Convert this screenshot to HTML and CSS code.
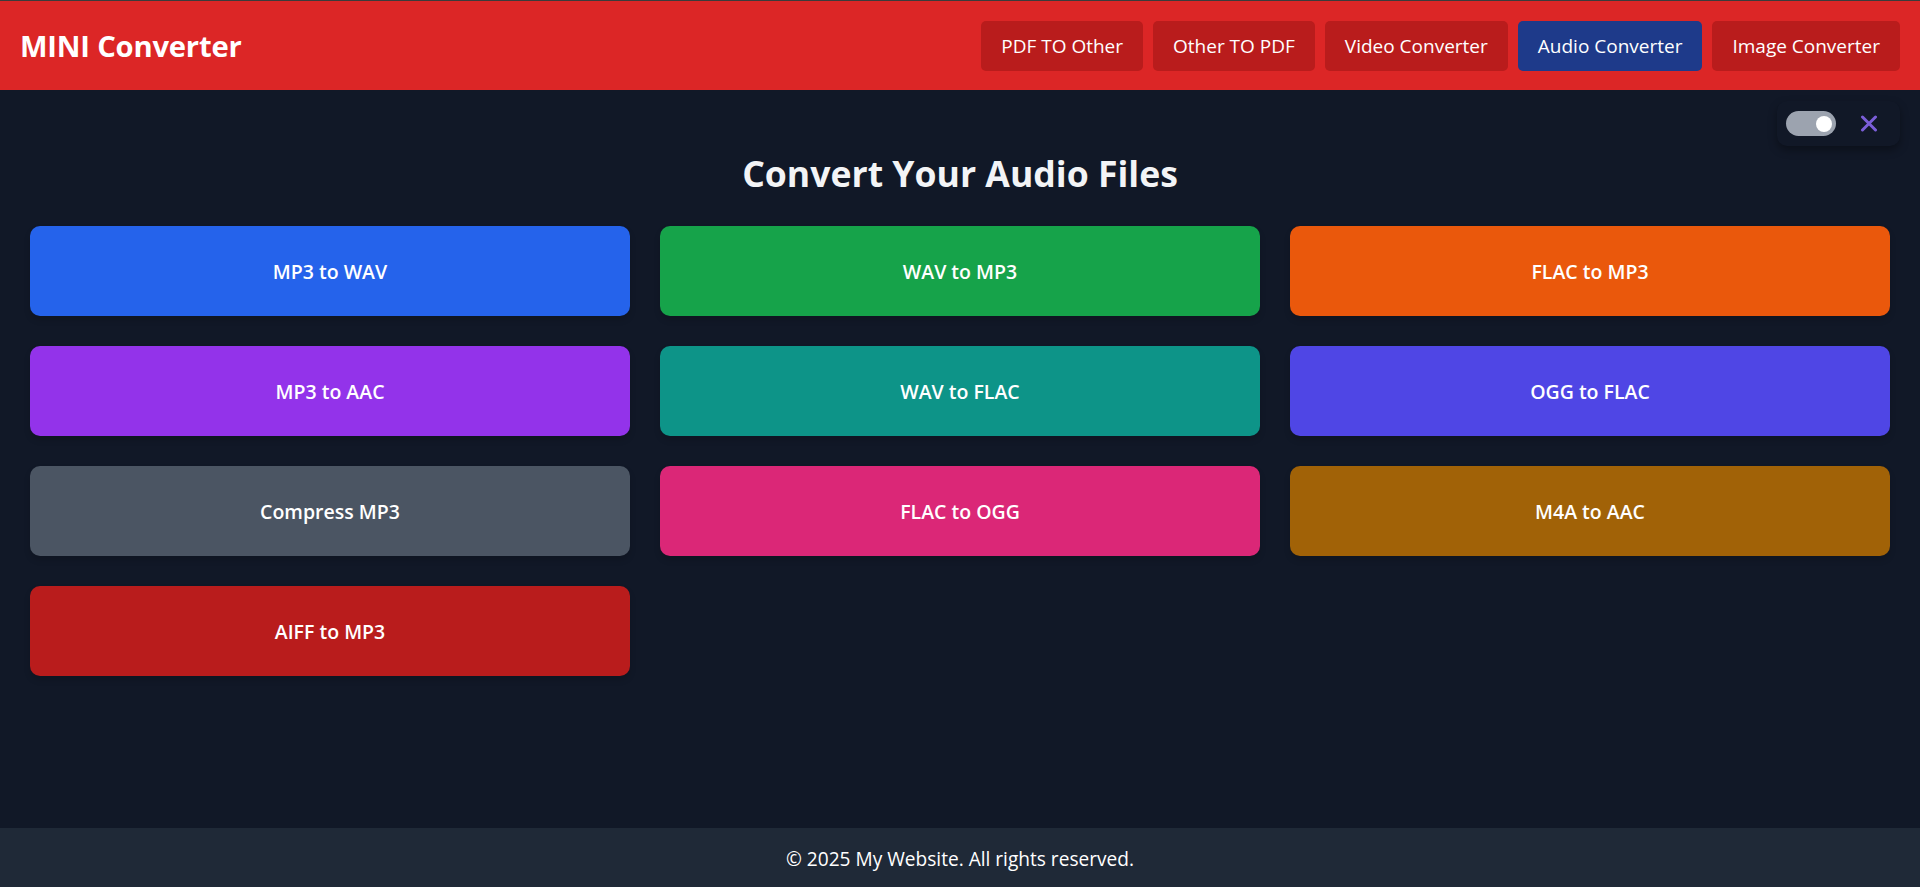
FILE: index.html
```html
<!DOCTYPE html>
<html lang="en">
<head>
<meta charset="utf-8">
<title>MINI Converter</title>
<link rel="stylesheet" href="styles.css">
</head>
<body>
<div class="page">
  <header class="header">
    <div class="logo">MINI Converter</div>
    <nav class="nav">
      <a class="nav-btn" href="#">PDF TO Other</a>
      <a class="nav-btn" href="#">Other TO PDF</a>
      <a class="nav-btn" href="#">Video Converter</a>
      <a class="nav-btn active" href="#">Audio Converter</a>
      <a class="nav-btn" href="#">Image Converter</a>
    </nav>
  </header>
  <main class="main">
    <div class="controls">
      <span class="toggle"><span class="knob"></span></span>
      <span class="close">
        <svg width="18" height="17" viewBox="0 0 18 17"><path d="M2.5 2 L15.5 15 M15.5 2 L2.5 15" stroke="#7b5ed8" stroke-width="3" stroke-linecap="round"/></svg>
      </span>
    </div>
    <h1 class="title">Convert Your Audio Files</h1>
    <div class="grid">
      <a class="tool c-blue" href="#">MP3 to WAV</a>
      <a class="tool c-green" href="#">WAV to MP3</a>
      <a class="tool c-orange" href="#">FLAC to MP3</a>
      <a class="tool c-purple" href="#">MP3 to AAC</a>
      <a class="tool c-teal" href="#">WAV to FLAC</a>
      <a class="tool c-indigo" href="#">OGG to FLAC</a>
      <a class="tool c-gray" href="#">Compress MP3</a>
      <a class="tool c-pink" href="#">FLAC to OGG</a>
      <a class="tool c-yellow" href="#">M4A to AAC</a>
      <a class="tool c-red" href="#">AIFF to MP3</a>
    </div>
  </main>
  <footer class="footer">© 2025 My Website. All rights reserved.</footer>
</div>
</body>
</html>
```
FILE: styles.css
```css
* { box-sizing: border-box; }
html, body { margin: 0; padding: 0; }
body {
  background: #111827;
  font-family: "Open Sans", "Noto Sans", sans-serif;
  color: #fff;
}
.page {
  height: 887px;
  display: flex;
  flex-direction: column;
  overflow: hidden;
}
.header {
  background: #dc2626;
  border-top: 1px solid #3b3b3b;
  padding: 20px 20px 19px 20px;
  display: flex;
  align-items: center;
  justify-content: space-between;
}
.logo {
  font-size: 29.2px;
  font-weight: 700;
  line-height: 40px;
  letter-spacing: -0.2px;
}
.nav { display: flex; gap: 10px; }
.nav-btn {
  display: block;
  background: #b91c1c;
  color: #fff;
  text-decoration: none;
  font-size: 19px;
  line-height: 30px;
  padding: 10px 20px;
  border-radius: 5px;
}
.nav-btn.active { background: #1e3a8a; }
.main {
  flex: 1;
  position: relative;
  padding: 61px 30px 30px;
}
.controls {
  position: absolute;
  top: 11px;
  right: 20px;
  display: flex;
  align-items: center;
  gap: 24px;
  padding: 10px 22px 10px 9px;
  border-radius: 10px;
  background: #111827;
  box-shadow: 0 4px 8px rgba(0, 0, 0, 0.35);
}
.toggle {
  width: 50px;
  height: 25px;
  border-radius: 13px;
  background: #9ca3af;
  position: relative;
  display: block;
}
.knob {
  position: absolute;
  right: 4px;
  top: 4.5px;
  width: 16px;
  height: 16px;
  border-radius: 50%;
  background: #fff;
}
.close { display: flex; }
.title {
  margin: 0 0 30px;
  text-align: center;
  font-size: 35.6px;
  line-height: 45px;
  font-weight: 700;
  color: #f3f4f6;
}
.grid {
  display: grid;
  grid-template-columns: repeat(3, 1fr);
  gap: 30px;
}
.tool {
  height: 90px;
  display: flex;
  align-items: center;
  justify-content: center;
  border-radius: 10px;
  color: #fff;
  text-decoration: none;
  font-size: 19.5px;
  font-weight: 600;
  box-shadow: 0 4px 6px rgba(0, 0, 0, 0.15);
}
.c-blue { background: #2563eb; }
.c-green { background: #16a34a; }
.c-orange { background: #ea580c; }
.c-purple { background: #9333ea; }
.c-teal { background: #0d9488; }
.c-indigo { background: #4f46e5; }
.c-gray { background: #4b5563; }
.c-pink { background: #db2777; }
.c-yellow { background: #a16207; }
.c-red { background: #b91c1c; }
.footer {
  background: #1f2937;
  height: 59px;
  flex: none;
  text-align: center;
  font-size: 19.1px;
  line-height: 30px;
  padding-top: 16px;
}
```
